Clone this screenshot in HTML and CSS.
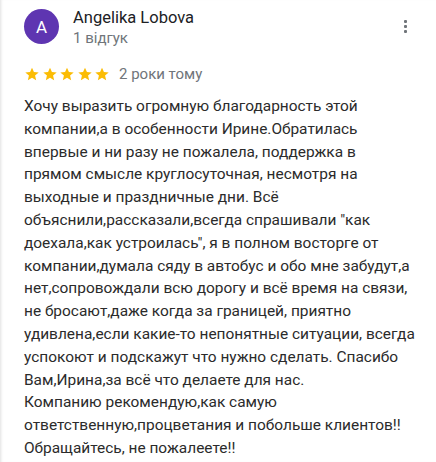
FILE: index.html
```html
<!DOCTYPE html>
<html lang="ru">
<head>
<meta charset="utf-8">
<link rel="stylesheet" href="styles.css">
</head>
<body>
<div class="card">
  <div class="header">
    <div class="avatar">A</div>
    <div class="who">
      <div class="name">Angelika Lobova</div>
      <div class="count">1 відгук</div>
    </div>
    <div class="menu"><span></span><span></span><span></span></div>
  </div>
  <div class="rating">
    <div class="stars">
      <svg viewBox="0 0 24 24"><path d="M12 2.5l2.9 6.6 7.1.6-5.4 4.7 1.6 7-6.2-3.7-6.2 3.7 1.6-7L2 9.7l7.1-.6z"/></svg>
      <svg viewBox="0 0 24 24"><path d="M12 2.5l2.9 6.6 7.1.6-5.4 4.7 1.6 7-6.2-3.7-6.2 3.7 1.6-7L2 9.7l7.1-.6z"/></svg>
      <svg viewBox="0 0 24 24"><path d="M12 2.5l2.9 6.6 7.1.6-5.4 4.7 1.6 7-6.2-3.7-6.2 3.7 1.6-7L2 9.7l7.1-.6z"/></svg>
      <svg viewBox="0 0 24 24"><path d="M12 2.5l2.9 6.6 7.1.6-5.4 4.7 1.6 7-6.2-3.7-6.2 3.7 1.6-7L2 9.7l7.1-.6z"/></svg>
      <svg viewBox="0 0 24 24"><path d="M12 2.5l2.9 6.6 7.1.6-5.4 4.7 1.6 7-6.2-3.7-6.2 3.7 1.6-7L2 9.7l7.1-.6z"/></svg>
    </div>
    <span class="date">2 роки тому</span>
  </div>
  <div class="text">Хочу выразить огромную благодарность этой<br>компании,а в особенности Ирине.Обратилась<br>впервые и ни разу не пожалела, поддержка в<br>прямом смысле круглосуточная, несмотря на<br>выходные и праздничные дни. Всё<br>объяснили,рассказали,всегда спрашивали "как<br>доехала,как устроилась", я в полном восторге от<br>компании,думала сяду в автобус и обо мне забудут,а<br>нет,сопровождали всю дорогу и всё время на связи,<br>не бросают,даже когда за границей, приятно<br>удивлена,если какие-то непонятные ситуации, всегда<br>успокоют и подскажут что нужно сделать. Спасибо<br>Вам,Ирина,за всё что делаете для нас.<br>Компанию рекомендую,как самую<br>ответственную,процветания и побольше клиентов!!<br>Обращайтесь, не пожалеете!!</div>
</div>
</body>
</html>
```

FILE: styles.css
```css
html, body {
  margin: 0;
  padding: 0;
  background: #fff;
}
body {
  font-family: Roboto, "Noto Sans", Arial, sans-serif;
  width: 436px;
  height: 462px;
  overflow: hidden;
}
.card {
  height: 462px;
  box-shadow: inset 3px 0 3px -2px rgba(0,0,0,0.12);
  padding: 9px 0 0 24px;
  box-sizing: border-box;
}
.header {
  display: flex;
  align-items: flex-start;
}
.avatar {
  width: 35px;
  height: 35px;
  border-radius: 50%;
  background: #5e35b1;
  color: #fff;
  font-size: 17px;
  display: flex;
  align-items: center;
  justify-content: center;
  flex: none;
}
.who {
  margin-left: 14px;
  flex: 1;
}
.name {
  font-size: 16.5px;
  color: #202124;
  line-height: 20px;
  margin-top: -1px;
}
.count {
  font-size: 15px;
  color: #70757a;
  line-height: 20px;
  margin-top: 0;
}
.menu {
  display: flex;
  flex-direction: column;
  gap: 2px;
  margin: 11px 29px 0 0;
}
.menu span {
  width: 3px;
  height: 3px;
  background: #70757a;
  border-radius: 1px;
}
.rating {
  display: flex;
  align-items: center;
  margin-top: 17px;
  height: 18px;
}
.stars {
  display: flex;
  gap: 1.5px;
}
.stars svg {
  width: 16px;
  height: 16px;
  fill: #fbbc04;
}
.date {
  margin-left: 9px;
  font-size: 15px;
  color: #70757a;
}
.text {
  margin-top: 12px;
  font-size: 15.45px;
  line-height: 22.8px;
  color: #2b2b2b;
  white-space: nowrap;
}
```
